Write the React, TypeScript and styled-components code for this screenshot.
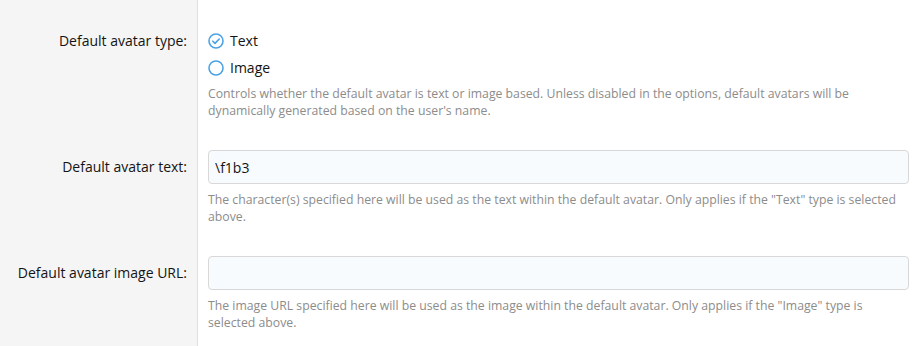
import React from 'react';
import styled, { createGlobalStyle } from 'styled-components';

const GlobalStyle = createGlobalStyle`
  html, body {
    margin: 0;
    padding: 0;
    background: #fff;
  }
  body {
    font-family: 'Open Sans', 'Liberation Sans', sans-serif;
    color: #141414;
  }
`;

const RadioIcon: React.FC<{ checked?: boolean }> = ({ checked }) => (
  <svg width="16" height="16" viewBox="0 0 16 16" fill="none">
    <circle cx="8" cy="8" r="7" stroke="#4aa3e6" strokeWidth="1.6" />
    {checked && (
      <path d="M4.8 8.2l2.2 2.2 4.2-4.4" stroke="#4aa3e6" strokeWidth="1.6" strokeLinecap="round" strokeLinejoin="round" />
    )}
  </svg>
);

const App: React.FC = () => {
  return (
    <>
      <GlobalStyle />
      <Form>
        <Row>
          <Label $top={31}>Default avatar type:</Label>
          <Control $top={32}>
            <RadioList>
              <Radio>
                <RadioIcon checked />
                <span>Text</span>
              </Radio>
              <Radio>
                <RadioIcon />
                <span>Image</span>
              </Radio>
            </RadioList>
            <Hint>
              Controls whether the default avatar is text or image based. Unless disabled in the options, default avatars will be
              dynamically generated based on the user's name.
            </Hint>
          </Control>
        </Row>
        <Row>
          <Label $top={0}>Default avatar text:</Label>
          <Control $top={0}>
            <Input defaultValue="\f1b3" />
            <Hint>
              The character(s) specified here will be used as the text within the default avatar. Only applies if the "Text" type is selected
              above.
            </Hint>
          </Control>
        </Row>
        <Row>
          <Label $top={0}>Default avatar image URL:</Label>
          <Control $top={0}>
            <Input defaultValue="" />
            <Hint>
              The image URL specified here will be used as the image within the default avatar. Only applies if the "Image" type is
              selected above.
            </Hint>
          </Control>
        </Row>
      </Form>
    </>
  );
};

export default App;

const Form = styled.div`
  width: 913px;
  height: 346px;
  overflow: hidden;
  background: linear-gradient(to right, #f5f5f5 0, #f5f5f5 197px, #dfdfdf 197px, #dfdfdf 198px, #fff 198px);
`;

const Row = styled.div`
  display: grid;
  grid-template-columns: 198px 1fr;
  padding-bottom: 31px;
`;

const Label = styled.div<{ $top: number }>`
  padding: ${p => p.$top}px 11px 0 0;
  text-align: right;
  font-size: 14px;
  line-height: 34px;
  color: #141414;
  margin-top: ${p => (p.$top ? -7 : 0)}px;
`;

const Control = styled.div<{ $top: number }>`
  padding: ${p => p.$top}px 4px 0 10px;
`;

const RadioList = styled.div`
  display: flex;
  flex-direction: column;
  gap: 9px;
  margin-bottom: 8px;
`;

const Radio = styled.label`
  display: flex;
  align-items: center;
  gap: 6px;
  font-size: 14px;
  line-height: 18px;
  color: #141414;
  svg {
    flex: none;
  }
`;

const Input = styled.input`
  display: block;
  box-sizing: border-box;
  width: 100%;
  height: 34px;
  padding: 0 6px;
  border: 1px solid #d8d8d8;
  border-radius: 4px;
  background: #f8fbfd;
  font-family: 'Open Sans', 'Liberation Sans', sans-serif;
  font-size: 14px;
  color: #141414;
  outline: none;
`;

const Hint = styled.div`
  margin-top: 7px;
  font-size: 12.25px;
  line-height: 17px;
  color: #8c8c8c;
`;
